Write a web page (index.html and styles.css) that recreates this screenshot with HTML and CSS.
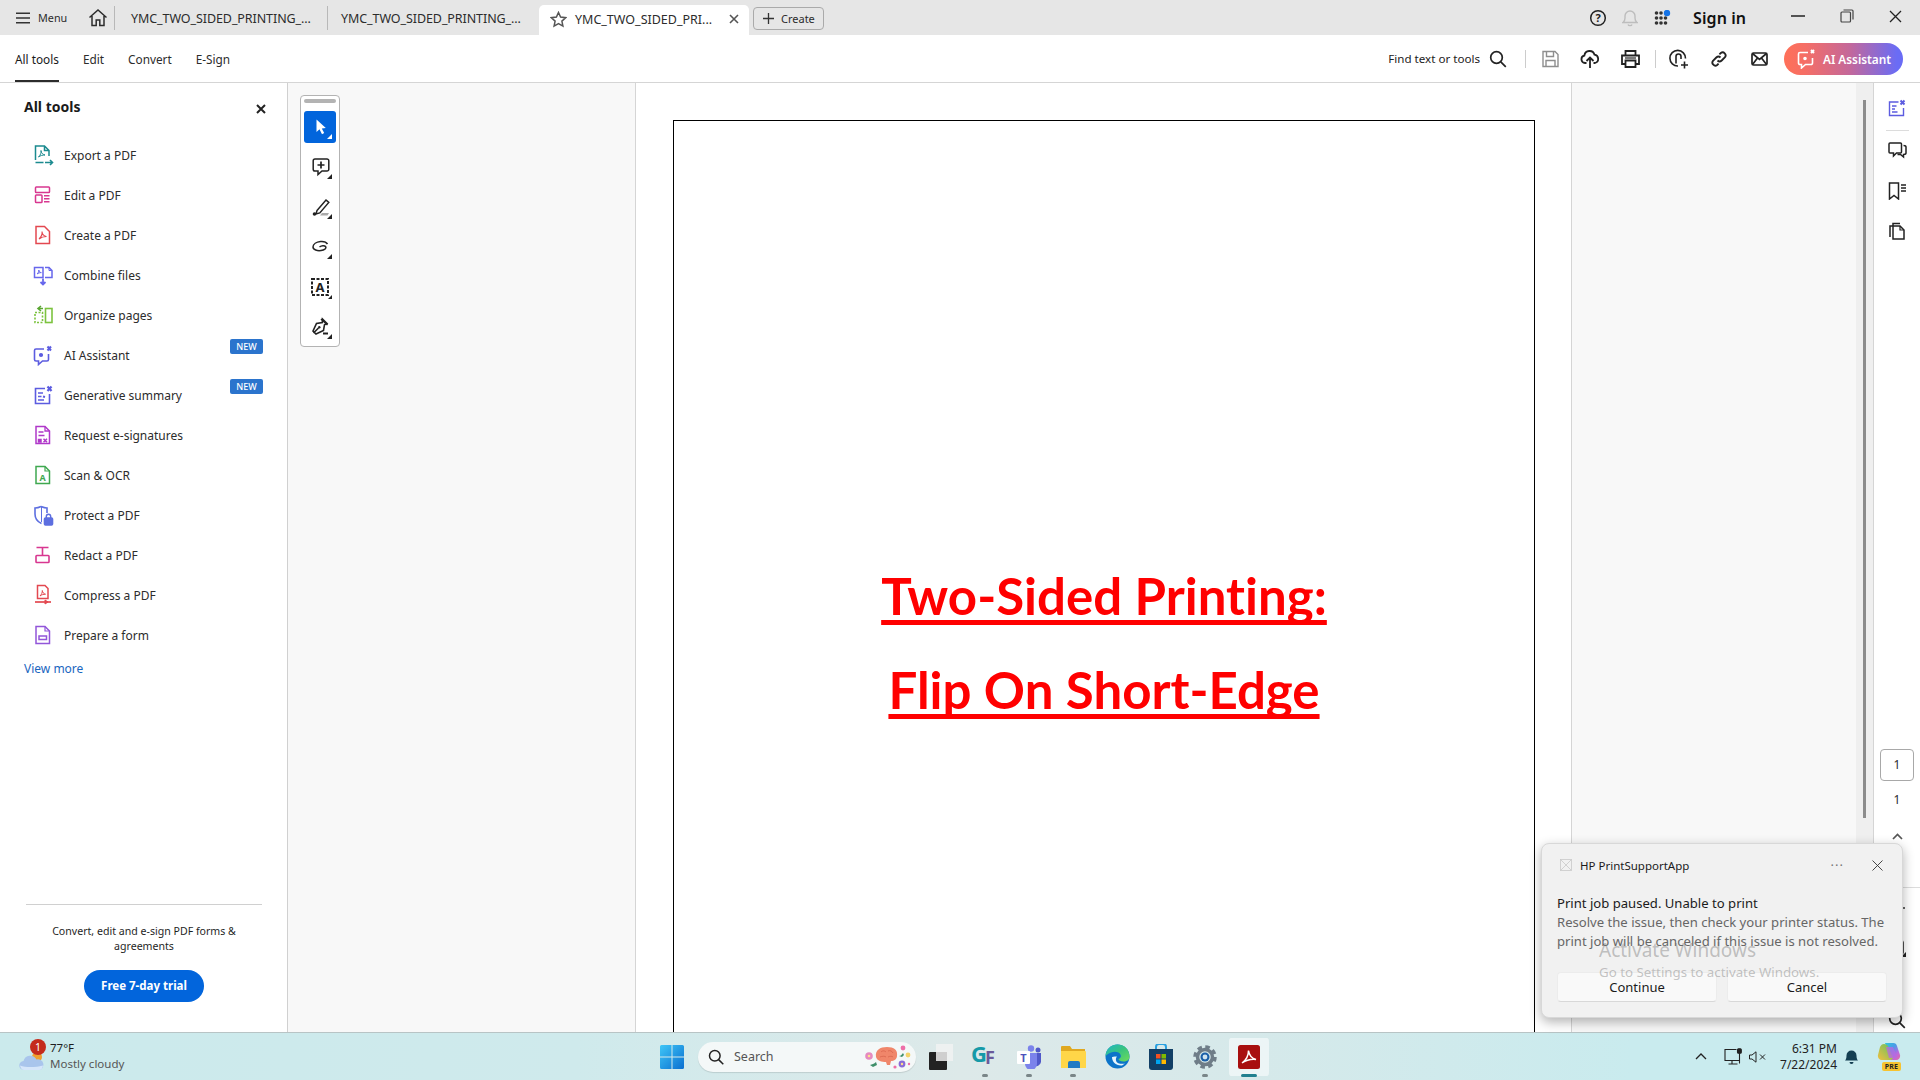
FILE: index.html
```html
<!DOCTYPE html>
<html lang="en">
<head>
<meta charset="utf-8">
<title>YMC_TWO_SIDED_PRINTING</title>
<link rel="stylesheet" href="styles.css">
</head>
<body>
<div class="app">
  <header class="tabbar">
    <div class="menu">
      <svg class="i" width="14" height="12" viewBox="0 0 14 12"><path d="M0 1.2h14M0 6h14M0 10.800h14" stroke="#333" stroke-width="1.6"/></svg>
      <span>Menu</span>
    </div>
    <div class="home">
      <svg width="20" height="20" viewBox="0 0 20 20" fill="none" stroke="#2c2c2c" stroke-width="1.5"><path d="M1.500 9.500 10 2l8.500 7.500M4 8v9.500h4.200v-5.500h3.600v5.500H16V8"/></svg>
    </div>
    <div class="tab tab-a">YMC_TWO_SIDED_PRINTING_...</div>
    <div class="tab tab-b">YMC_TWO_SIDED_PRINTING_...</div>
    <div class="tab-active">
      <svg width="17" height="17" viewBox="0 0 17 17" fill="none" stroke="#555" stroke-width="1.500"><path d="m8.500 1.500 2.100 4.600 5 .6-3.700 3.400 1 5-4.400-2.500-4.400 2.500 1-5L1.400 6.700l5-.6z"/></svg>
      <span class="tab-title">YMC_TWO_SIDED_PRI...</span>
      <svg class="tab-x" width="10" height="10" viewBox="0 0 10 10"><path d="m1 1 8 8M9 1 1 9" stroke="#555" stroke-width="1.600"/></svg>
    </div>
    <div class="create">
      <svg width="11" height="11" viewBox="0 0 11 11"><path d="M5.500 0v11M0 5.500h11" stroke="#333" stroke-width="1.300"/></svg>
      <span>Create</span>
    </div>
    <div class="top-right">
      <div class="top-cell">
        <svg width="18" height="18" viewBox="0 0 18 18"><circle cx="9" cy="9" r="7.300" fill="none" stroke="#222" stroke-width="1.500"/><text x="9" y="12.800" text-anchor="middle" class="svg-q">?</text></svg>
      </div>
      <div class="top-cell">
        <svg width="16" height="18" viewBox="0 0 16 18" fill="none" stroke="#bdbdbd" stroke-width="1.400"><path d="M1 13.500c1.500-1 2-2 2-4.500V7a5 5 0 0 1 10 0v2c0 2.500.5 3.500 2 4.500zM6 15.500c.5 1.500 3.500 1.500 4 0"/></svg>
      </div>
      <div class="top-cell">
        <svg width="17" height="16" viewBox="0 0 17 16"><g fill="#333"><circle cx="2.500" cy="3" r="1.800"/><circle cx="7" cy="3" r="1.800"/><circle cx="2.500" cy="8" r="1.800"/><circle cx="7" cy="8" r="1.800"/><circle cx="11.500" cy="8" r="1.800"/><circle cx="2.500" cy="13" r="1.800"/><circle cx="7" cy="13" r="1.800"/><circle cx="11.500" cy="13" r="1.800"/></g><circle cx="13" cy="3" r="3.200" fill="#1473e6"/></svg>
      </div>
      <div class="signin">Sign in</div>
      <div class="win-cell">
        <svg width="14" height="2" viewBox="0 0 14 2"><path d="M0 1h14" stroke="#222" stroke-width="1.500"/></svg>
      </div>
      <div class="win-cell">
        <svg width="14" height="14" viewBox="0 0 14 14" fill="none" stroke="#444" stroke-width="1.200"><rect x="1" y="3" width="9.500" height="10" rx="1"/><path d="M3.500 1H12a1 1 0 0 1 1 1v8.500"/></svg>
      </div>
      <div class="win-cell">
        <svg width="13" height="13" viewBox="0 0 13 13"><path d="m1 1 11 11M12 1 1 12" stroke="#222" stroke-width="1.300"/></svg>
      </div>
    </div>
  </header>

  <nav class="toolbar">
    <div class="nav-item nav-active">All tools</div>
    <div class="nav-item">Edit</div>
    <div class="nav-item">Convert</div>
    <div class="nav-item">E-Sign</div>
    <div class="tb-right">
      <span class="find">Find text or tools</span>
      <div class="search-cell">
        <svg width="18" height="18" viewBox="0 0 18 18" fill="none" stroke="#222" stroke-width="1.700"><circle cx="7.500" cy="7.500" r="5.800"/><path d="m11.800 11.800 5 5"/></svg>
      </div>
      <div class="tb-sep tb-sep-a"></div>
      <div class="tb-cell">
        <svg width="17" height="18" viewBox="0 0 17 18" fill="none" stroke="#8e8e8e" stroke-width="1.400"><path d="M1 1.500h12L16 4.500v12H1zM4.500 1.500v5h7v-5M4 16.500v-6h9v6"/></svg>
      </div>
      <div class="tb-cell">
        <svg width="20" height="20" viewBox="0 0 20 20" fill="none" stroke="#222" stroke-width="1.800"><path d="M6.500 14H5a3.800 3.800 0 0 1-.6-7.500A5.200 5.200 0 0 1 14.500 5.600 4.300 4.300 0 0 1 15 14h-1.500M10 19V9M6.500 12 10 8.500l3.500 3.500"/></svg>
      </div>
      <div class="tb-cell">
        <svg width="19" height="18" viewBox="0 0 19 18" fill="none" stroke="#222" stroke-width="1.800"><path d="M4.500 5V1h10v4M4.500 14H1V5.500h17V14h-3.500"/><path d="M4.500 10.500h10V17h-10z"/><path d="M4 8h11" stroke-width="1.200"/></svg>
      </div>
      <div class="tb-sep tb-sep-b"></div>
      <div class="tb-cell">
        <svg width="20" height="20" viewBox="0 0 20 20" fill="none" stroke="#222" stroke-width="1.600"><path d="M9 17A7.800 7.800 0 1 1 16.500 9.500M7 14.500V7.500a2.500 2.500 0 0 1 5 0V10"/><path d="M15.500 12.500v7M12 16h7"/></svg>
      </div>
      <div class="tb-cell">
        <svg width="18" height="18" viewBox="0 0 18 18" fill="none" stroke="#222" stroke-width="1.800"><path d="M7.500 10.500a3 3 0 0 0 4.200 0l3.300-3.300a3 3 0 0 0-4.200-4.200L9.400 4.400"/><path d="M10.500 7.500a3 3 0 0 0-4.200 0L3 10.800A3 3 0 0 0 7.200 15l1.400-1.400"/></svg>
      </div>
      <div class="tb-cell">
        <svg width="17" height="14" viewBox="0 0 17 14" fill="none" stroke="#222" stroke-width="1.700"><rect x="1" y="1" width="15" height="12" rx="1.500"/><path d="m1.500 1.500 7 6 7-6M1.500 12.500 6.500 6M15.500 12.500l-5-6.500"/></svg>
      </div>
      <div class="ai-btn">
        <svg width="20" height="20" viewBox="0 0 20 20" fill="none" stroke="#fff" stroke-width="1.600"><path d="M11 3.500H3a1.500 1.500 0 0 0-1.500 1.500v9A1.500 1.500 0 0 0 3 15.500h1.500V19l4-3.500H14a1.500 1.500 0 0 0 1.500-1.500V9"/><path d="m14 1 3 3M17 1l-3 3" stroke-width="2"/><circle cx="8" cy="9.500" r="1" fill="#fff"/></svg>
        <span>AI Assistant</span>
      </div>
    </div>
  </nav>

  <main class="main">
    <aside class="sidebar">
      <div class="side-head">
        <h2>All tools</h2>
        <svg width="10" height="10" viewBox="0 0 10 10"><path d="m1 1 8 8M9 1 1 9" stroke="#222" stroke-width="2"/></svg>
      </div>
      <div class="tool">
        <svg width="22" height="22" viewBox="0 0 22 22" fill="none" stroke="#1b8a8f" stroke-width="1.500"><path d="M3.500 16V2h9l4.500 4.500V12M12.500 2v4.500H17M3.500 18.500h8"/><path d="M6.500 13c2-2 3-4.500 2.500-6.500 0 2.500 2 4 4 4.500-2.500 0-4.500.5-6.500 2z" stroke-width="1"/><path d="M13 18.500h7.500M18 16l2.500 2.500L18 21" stroke-width="1.600"/></svg>
        <span>Export a PDF</span>
      </div>
      <div class="tool">
        <svg width="22" height="22" viewBox="0 0 22 22" fill="none" stroke="#d83790" stroke-width="1.500"><rect x="3.500" y="3" width="14" height="5.500" rx=".8"/><rect x="3.500" y="11" width="6.500" height="7.500" rx=".8"/><path d="M12 11.800h5.500M12 14.800h5.500M12 17.800h5.500"/></svg>
        <span>Edit a PDF</span>
      </div>
      <div class="tool">
        <svg width="22" height="22" viewBox="0 0 22 22" fill="none" stroke="#e34850" stroke-width="1.500"><path d="M4 2.500h8.500l5 5v12H4z"/><path d="M7 15c2-2 3.500-5 3-7.500.2 2.700 2 4.500 4.500 5-2.700 0-5.300.8-7.500 2.500z" stroke-width="1.100"/></svg>
        <span>Create a PDF</span>
      </div>
      <div class="tool">
        <svg width="22" height="22" viewBox="0 0 22 22" fill="none" stroke="#6767ec" stroke-width="1.500"><path d="M2.500 13.500v-10h8.500v10zM13 3.500h4l3 3v7h-7"/><path d="M5 10c1.200-1 2-2.500 1.800-4 .2 1.500 1 2.300 2.500 2.600-1.500 0-3 .4-4.300 1.400zM17 3.500v3h3" stroke-width="1"/><path d="M11 14.500v5.500M8.500 18l2.500 2.500 2.500-2.500" stroke-width="1.800"/></svg>
        <span>Combine files</span>
      </div>
      <div class="tool">
        <svg width="22" height="22" viewBox="0 0 22 22" fill="none" stroke="#7cc33f" stroke-width="1.600"><rect x="13.500" y="4.500" width="6.500" height="14"/><path d="M3 8.500h7.500v10H3z" stroke-dasharray="2 1.500"/><path d="M11 4.500H7M9 2 6 4.500 9 7" stroke="#59a632"/></svg>
        <span>Organize pages</span>
      </div>
      <div class="tool">
        <svg width="22" height="22" viewBox="0 0 22 22" fill="none" stroke="#5c5ce0" stroke-width="1.600"><path d="M12 5H4a1.500 1.500 0 0 0-1.500 1.500v9A1.500 1.500 0 0 0 4 17h2.500v3.500l4-3.500H15a1.500 1.500 0 0 0 1.500-1.500V10"/><path d="m15.500 2.500 3.500 4M19 2.500l-3.500 4" stroke-width="2"/><circle cx="9" cy="11" r="1.300" fill="#5c5ce0"/></svg>
        <span>AI Assistant</span>
        <b class="new">NEW</b>
      </div>
      <div class="tool">
        <svg width="22" height="22" viewBox="0 0 22 22" fill="none" stroke="#5c5ce0" stroke-width="1.600"><path d="M13 4.500H3.500v15h14V10"/><path d="M6 9h5M6 12.500h3.500M6 16h6" stroke-width="1.500"/><path d="m11 12.500 2 .5" stroke-width="2"/><path d="m15.500 2.500 4 4.500M19.500 2.500l-4 4.500" stroke-width="2.200"/></svg>
        <span>Generative summary</span>
        <b class="new">NEW</b>
      </div>
      <div class="tool">
        <svg width="22" height="22" viewBox="0 0 22 22" fill="none" stroke="#b038c9" stroke-width="1.500"><path d="M4 2.500h9l4.500 4.500v12.500H4z"/><path d="M13 2.500V7h4.500M6.500 8h5M6.500 11.500h6" stroke-width="1.300"/><path d="M6.500 15.500h2.500v2.500H6.500z" fill="#b038c9"/><path d="m11.500 14.800 3.500 3.500M15 14.800l-3.500 3.500"/></svg>
        <span>Request e-signatures</span>
      </div>
      <div class="tool">
        <svg width="22" height="22" viewBox="0 0 22 22" fill="none" stroke="#3fa850" stroke-width="1.500"><path d="M4 2.500h9l4.500 4.500v12.500H4z"/><path d="M13 2.500V7h4.500" stroke-width="1.200"/><text x="10.700" y="16.800" text-anchor="middle" class="svg-a">A</text></svg>
        <span>Scan &amp; OCR</span>
      </div>
      <div class="tool">
        <svg width="22" height="22" viewBox="0 0 22 22" fill="none" stroke="#5d6fe0" stroke-width="1.600"><path d="M9 2.500c-2 1-4 1.500-6 1.500v6c0 5 3 8 6.500 9.500M9 2.500c2.500 1 4.500 1.500 6 1.500v5"/><path d="M9.500 3v15" stroke-width="1"/><rect x="12.500" y="14" width="8" height="7" rx="1" fill="#5d6fe0"/><path d="M14.300 14v-1.500a2.200 2.200 0 0 1 4.400 0V14" stroke-width="1.400"/></svg>
        <span>Protect a PDF</span>
      </div>
      <div class="tool">
        <svg width="22" height="22" viewBox="0 0 22 22" fill="none" stroke="#d83790" stroke-width="1.600"><path d="M4.500 3.500h12M10.500 3.500v7.500"/><rect x="4" y="11.500" width="13" height="7" rx=".8"/></svg>
        <span>Redact a PDF</span>
      </div>
      <div class="tool">
        <svg width="22" height="22" viewBox="0 0 22 22" fill="none" stroke="#e34850" stroke-width="1.500"><path d="M5.500 14.500v-13H13l3 3v10z"/><path d="M8 12c1.500-1.500 2.500-3.500 2.300-5.500.2 2 1.400 3.300 3.200 3.700-2 0-4 .5-5.500 1.800z" stroke-width="1"/><path d="M3 18h16" stroke-width="1.700"/><path d="m13 16 3 2-3 2z" fill="#e34850" stroke-width="1"/></svg>
        <span>Compress a PDF</span>
      </div>
      <div class="tool">
        <svg width="22" height="22" viewBox="0 0 22 22" fill="none" stroke="#9256d9" stroke-width="1.500"><path d="M4 2.500h9l4.500 4.500v12.500H4z"/><path d="M13 2.500V7h4.500" stroke-width="1.200"/><rect x="7" y="12" width="7.500" height="3.500" stroke-width="1.500"/></svg>
        <span>Prepare a form</span>
      </div>
      <a class="view-more">View more</a>
      <div class="side-foot">
        <p>Convert, edit and e-sign PDF forms &amp; agreements</p>
        <div class="trial">Free 7-day trial</div>
      </div>
    </aside>

    <section class="gutter">
      <div class="rail">
        <div class="grip"></div>
        <div class="rbtn rbtn-on">
          <svg width="32" height="32" viewBox="0 0 32 32"><path d="M12.500 8.500v12.500l3-2.700 2.500 4.900 2.200-1.100-2.400-4.700 4-.4z" fill="#fff"/><path d="M28 23v5h-5z" fill="#fff"/></svg>
        </div>
        <div class="rbtn">
          <svg width="32" height="32" viewBox="0 0 32 32" fill="none" stroke="#222" stroke-width="1.500"><path d="M11 8h12a1.800 1.800 0 0 1 1.800 1.800v8.400A1.800 1.800 0 0 1 23 20h-5l-4 3.500V20h-3a1.800 1.800 0 0 1-1.800-1.800V9.800A1.800 1.800 0 0 1 11 8z"/><path d="M17 10.500v7M13.500 14h7" stroke-width="1.700"/><path d="M28 23v5h-5z" fill="#222" stroke="none"/></svg>
        </div>
        <div class="rbtn">
          <svg width="32" height="32" viewBox="0 0 32 32" fill="none" stroke="#222" stroke-width="1.500"><path d="m13 19.500 9-10.500 2.800 2.400-9 10.500-3.800 1z"/><circle cx="10.500" cy="23" r="1.800" fill="#222" stroke="none"/><path d="M16 24.500l2-2.500h7l-1.500 2.500z" fill="#aaa" stroke="none"/><path d="M28 23v5h-5z" fill="#222" stroke="none"/></svg>
        </div>
        <div class="rbtn">
          <svg width="32" height="32" viewBox="0 0 32 32" fill="none" stroke="#222" stroke-width="1.500"><path d="M23.500 13c-1.500-2.500-4-2.800-7-2.500-4 .4-7.500 2.500-7.500 5.500 0 3 4.500 4 8 3.500 3-.4 6-2 4.500-4-1-1.300-4-1-6 .5"/><path d="M28 23v5h-5z" fill="#222" stroke="none"/></svg>
        </div>
        <div class="rbtn">
          <svg width="32" height="32" viewBox="0 0 32 32"><rect x="8" y="8" width="16" height="16" fill="none" stroke="#222" stroke-width="2" stroke-dasharray="3 1.500"/><text x="16" y="21" text-anchor="middle" class="svg-ta">A</text><path d="M28 24v4h-4z" fill="#222"/></svg>
        </div>
        <div class="rbtn">
          <svg width="32" height="32" viewBox="0 0 32 32" fill="none" stroke="#222" stroke-width="1.600"><path d="M18.500 8 23 12.500l-2.500 1.200-1 5.800-7.500 3.500-3-3 3.500-7.500 5.800-1zM9.500 22l5-5"/><circle cx="15.300" cy="16.300" r="1.200" fill="#222" stroke="none"/><path d="m17 8 6.500 6" stroke-width="1.500"/><path d="M19 22.500h5" stroke-width="2"/><path d="M28 23v5h-5z" fill="#222" stroke="none"/></svg>
        </div>
      </div>
    </section>

    <section class="pane">
      <div class="sheet">
        <h1>Two-Sided Printing:</h1>
        <h1>Flip On Short-Edge</h1>
      </div>
    </section>

    <section class="gray-right"></section>
    <div class="scroll"><div class="thumb"></div></div>

    <aside class="right-rail">
      <div class="rr-top">
        <svg width="18" height="18" viewBox="0 0 18 18" fill="none" stroke="#5c5ce0" stroke-width="1.400"><path d="M10.500 3H1.500v13.500h14V9"/><path d="M4 7h4.500M4 10h3M4 13h5.500"/><path d="m12.500 1.500 4 4M16.500 1.500l-4 4" stroke-width="2"/></svg>
      </div>
      <div class="rr-line"></div>
      <div class="rr-icon rr-a">
        <svg width="19" height="18" viewBox="0 0 19 18" fill="none" stroke="#222" stroke-width="1.500"><path d="M1 2a1 1 0 0 1 1-1h10.500a1 1 0 0 1 1 1v8a1 1 0 0 1-1 1H8.500L5.500 14v-3H2a1 1 0 0 1-1-1z"/><path d="M15.500 3.500c1.500 0 2.500.5 2.500 1.500v6c0 1-1 1.500-2.500 1.500v2.500l-3-2.500h-3"/></svg>
      </div>
      <div class="rr-icon rr-b">
        <svg width="19" height="18" viewBox="0 0 19 18" fill="none" stroke="#222" stroke-width="1.500"><path d="M1.500 1h9v16l-4.500-3.500L1.500 17z"/><path d="M13 3h5M13 6h5M13 9h5" stroke-width="1.300"/></svg>
      </div>
      <div class="rr-icon rr-b">
        <svg width="17" height="18" viewBox="0 0 17 18" fill="none" stroke="#222" stroke-width="1.500"><path d="M4 4V1.500h7M4 4H1v11M4 4h7l4 4v9H4z"/><path d="M11 4v4h4" stroke-width="1.200"/></svg>
      </div>
      <div class="rr-bottom">
        <div class="page-box">1</div>
        <div class="page-num">1</div>
        <div class="page-up">
          <svg width="11" height="7" viewBox="0 0 11 7"><path d="m1 6 4.500-4.500L10 6" fill="none" stroke="#555" stroke-width="1.700"/></svg>
        </div>
        <div class="rr-line rr-line-b"></div>
        <div class="rr-row"><svg width="18" height="18" viewBox="0 0 18 18"><path d="M9 1v16M1 9h16" stroke="#333" stroke-width="1.600"/></svg></div>
        <div class="rr-row"><svg width="18" height="18" viewBox="0 0 18 18" fill="none" stroke="#222" stroke-width="1.600"><rect x="2" y="2" width="13" height="13" rx="1.500"/><path d="M18 13v5h-5z" fill="#222" stroke="none"/></svg></div>
        <div class="rr-row"><svg width="18" height="18" viewBox="0 0 18 18"><path d="M9 3v12M3 9h12" stroke="#333" stroke-width="1.600"/></svg></div>
        <div class="rr-row rr-last"><svg width="18" height="18" viewBox="0 0 18 18" fill="none" stroke="#222" stroke-width="1.700"><circle cx="7.500" cy="7.500" r="5.800"/><path d="m11.800 11.800 5 5"/></svg></div>
      </div>
    </aside>
  </main>

  <footer class="taskbar">
    <div class="weather">
      <div class="w-icon">
        <svg width="26" height="22" viewBox="0 0 26 22"><circle cx="18" cy="8" r="5" fill="#f0a030"/><path d="M5 21a4.500 4.500 0 0 1-.5-9 7 7 0 0 1 13-1.500A5.300 5.300 0 0 1 20.500 21z" fill="#a9c5ec"/><path d="M1 16.500c6 2 15 2 23 0-.5 3-2 4.500-3.500 4.500H5c-2 0-3.500-2-4-4.500z" fill="#d6e6fa"/></svg>
        <span class="w-badge">1</span>
      </div>
      <div class="w-text">
        <div class="w-temp">77°F</div>
        <div class="w-desc">Mostly cloudy</div>
      </div>
    </div>
    <div class="start">
      <svg width="24" height="24" viewBox="0 0 24 24"><defs><linearGradient id="win" x1="0" y1="0" x2="1" y2="1"><stop offset="0" stop-color="#3fc6f7"/><stop offset="1" stop-color="#0a6fd0"/></linearGradient></defs><path d="M0 1.500A1.500 1.500 0 0 1 1.500 0h10v11.500H0zM12.500 0h10A1.500 1.500 0 0 1 24 1.500v10H12.500zM0 12.500h11.500V24h-10A1.500 1.500 0 0 1 0 22.500zM12.500 12.500H24v10a1.500 1.500 0 0 1-1.500 1.500h-10z" fill="url(#win)"/></svg>
    </div>
    <div class="tsearch">
      <svg width="16" height="16" viewBox="0 0 16 16" fill="none" stroke="#222" stroke-width="1.500"><circle cx="6.800" cy="6.800" r="5.300"/><path d="m10.600 10.600 4.700 4.700"/></svg>
      <span>Search</span>
      <svg class="brain" width="48" height="28" viewBox="0 0 48 28"><circle cx="5" cy="13" r="3.800" fill="#e58ac0"/><circle cx="5" cy="13" r="1.300" fill="#ffe08a"/><path d="M6 22c2-1 4-1 6-3l1 3-4 2z" fill="#3f8f6a"/><path d="M12 14C11 7 16 4 23 4s11 3 10 9c0 3-3 5-6 5l-1 4h-3l-1-3c-4 0-9-1-10-5z" fill="#f0866a"/><path d="M17 9c2-2 4-1 5 0M24 8c2-1 4 0 5 2M16 14c2-1 5-1 6 0M24 14c2-1 4-1 5 0" fill="none" stroke="#d8644c" stroke-width=".8"/><circle cx="39" cy="5" r="2.400" fill="#ee6ea8"/><path d="M35 13c2 0 3-2 4-3l1 2-2 2z" fill="#3f8f6a"/><circle cx="44" cy="12" r="2.400" fill="#f3d36a"/><circle cx="38" cy="21" r="3.400" fill="#8a6bd8"/><circle cx="38" cy="21" r="1.200" fill="#ffe08a"/><circle cx="31" cy="24" r="1.600" fill="#ee6ea8"/><circle cx="45" cy="21" r="1.200" fill="#ee6ea8"/></svg>
    </div>
    <div class="task">
      <svg width="24" height="26" viewBox="0 0 24 26"><rect x="7" y="0" width="17" height="17" fill="#f2f2f2" opacity=".8"/><rect x="0" y="8" width="18" height="18" rx="1" fill="#222"/><rect x="7" y="8" width="11" height="9" fill="#cfcfcf"/></svg>
    </div>
    <div class="task task-dot">
      <svg width="30" height="26" viewBox="0 0 30 26"><text x="1" y="18" class="svg-g">G</text><text x="15" y="19.500" class="svg-f">F</text></svg>
    </div>
    <div class="task task-dot">
      <svg width="26" height="24" viewBox="0 0 26 24"><circle cx="15" cy="3.500" r="3.200" fill="#7b83eb"/><circle cx="22" cy="5" r="2.500" fill="#5059c9"/><path d="M18.500 8H25v9a5 5 0 0 1-6 4z" fill="#5059c9"/><path d="M9 8h12v11a6 6 0 0 1-12 0z" fill="#7b83eb"/><rect x="1" y="6" width="13" height="13" rx="1" fill="#fff"/><text x="7.500" y="16.500" text-anchor="middle" class="svg-t">T</text></svg>
    </div>
    <div class="task task-dot">
      <svg width="25" height="24" viewBox="0 0 25 24"><path d="M0 2a1 1 0 0 1 1-1h8l2 3h13v4H0z" fill="#e0a820"/><path d="M0 6h24a1 1 0 0 1 1 1v16H0z" fill="#ffd648"/><path d="M7 18a2 2 0 0 1 2-2h8a2 2 0 0 1 2 2v5H7z" fill="#1f7ac4"/></svg>
    </div>
    <div class="task">
      <svg width="25" height="25" viewBox="0 0 25 25"><defs><linearGradient id="ed" x1="0" y1="0" x2="1" y2="1"><stop offset="0" stop-color="#1fb6c8"/><stop offset=".5" stop-color="#39c47e"/><stop offset="1" stop-color="#6fdc5a"/></linearGradient></defs><circle cx="12.500" cy="12.500" r="12" fill="#0c74c9"/><path d="M.5 12C1 5 6 .5 12.500.5S24.500 5 24.500 13c0 3-3 4.500-6 4.500s-5-1-5-2.500c1.500-.5 3-2 2.200-4C14.500 8 10 7 6 8.500 3.500 9.500 1.500 11 .5 12z" fill="url(#ed)"/><path d="M7 13c0 5 4 9 10 8.500l3-2c-2 .5-8 1-9-3-.5-2 .5-3.500 1-4-3 0-5 .5-5 .5z" fill="#e6f4fb"/></svg>
    </div>
    <div class="task">
      <svg width="24" height="26" viewBox="0 0 24 26"><path d="M7 6V3a3 3 0 0 1 3-3h4a3 3 0 0 1 3 3v3" fill="none" stroke="#2aa0e0" stroke-width="2"/><path d="M0 5h24v18a3 3 0 0 1-3 3H3a3 3 0 0 1-3-3z" fill="#123f66"/><rect x="7" y="10" width="4.500" height="4.500" fill="#f25022"/><rect x="12.500" y="10" width="4.500" height="4.500" fill="#7fba00"/><rect x="7" y="15.500" width="4.500" height="4.500" fill="#00a4ef"/><rect x="12.500" y="15.500" width="4.500" height="4.500" fill="#ffb900"/></svg>
    </div>
    <div class="task task-dot">
      <svg width="24" height="24" viewBox="0 0 24 24" fill="none"><circle cx="12" cy="12" r="10" stroke="#6f7d88" stroke-width="3.500" stroke-dasharray="4.500 3.350"/><circle cx="12" cy="12" r="7.500" stroke="#6f7d88" stroke-width="3.500"/><circle cx="12" cy="12" r="4.500" fill="#1b5fa8"/><circle cx="12" cy="12" r="2.400" fill="#cfe3ef"/></svg>
    </div>
    <div class="task task-on">
      <svg width="22" height="24" viewBox="0 0 22 24"><rect width="22" height="24" rx="2.500" fill="#a80f0f"/><path d="M4 18c3.500-2.500 6.500-7 6.500-12.500.5 4 2.500 7.500 7.500 9-4.500-.5-9.500.5-14 3.500z" fill="none" stroke="#fff" stroke-width="1.500"/></svg>
    </div>
    <div class="tray">
      <div class="tr-chev"><svg width="12" height="7" viewBox="0 0 12 7"><path d="m1 6 5-5 5 5" fill="none" stroke="#222" stroke-width="1.300"/></svg></div>
      <div class="tr-mon"><svg width="19" height="17" viewBox="0 0 19 17" fill="none" stroke="#222" stroke-width="1.100"><path d="M12.500 1.500H1v11h15M8 12.500V16M4.500 16h9"/><rect x="13.500" y=".8" width="3.800" height="4.500" rx="1" fill="#222"/><path d="M15.500 5v10.500"/></svg></div>
      <div class="tr-vol"><svg width="17" height="12" viewBox="0 0 17 12" fill="none" stroke="#222" stroke-width="1"><path d="M.5 4h2.500L7 .8v10.400L3 8H.5z"/><path d="m11 3.500 5 5M16 3.500l-5 5"/></svg></div>
      <div class="clock"><div>6:31 PM</div><div>7/22/2024</div></div>
      <div class="tr-bell"><svg width="13" height="15" viewBox="0 0 13 15"><path d="M0 11.500c1-1 1.500-2.500 1.500-5a5 5 0 0 1 10 0c0 2.500.5 4 1.500 5zM4.500 13h4a2 2 0 0 1-4 0z" fill="#143f52"/></svg></div>
      <div class="tr-cop">
        <svg width="24" height="26" viewBox="0 0 24 26"><defs><linearGradient id="cp" x1="0" y1="0" x2="1" y2="1"><stop offset="0" stop-color="#31c8d8"/><stop offset=".4" stop-color="#4a9be8"/><stop offset=".7" stop-color="#b86ae0"/><stop offset="1" stop-color="#e86aa0"/></linearGradient><linearGradient id="cq" x1="0" y1="1" x2="1" y2="0"><stop offset="0" stop-color="#f0c040"/><stop offset="1" stop-color="#60c060"/></linearGradient></defs><path d="M8 0h8a4 4 0 0 1 4 3l3 9a4 4 0 0 1-4 5h-5L8 0z" fill="url(#cp)"/><path d="M7 1c-2 0-3 1-4 3l-2 8a4 4 0 0 0 4 5h8a3 3 0 0 0 3-2L11 3C10 2 9 1 7 1z" fill="url(#cq)"/><path d="M9 4h7l4 9c0 1-1 2-2 2h-6z" fill="#b86ae0" opacity=".75"/></svg>
        <span class="pre">PRE</span>
      </div>
    </div>
  </footer>
</div>

<div class="activate">
  <div class="act-a">Activate Windows</div>
  <div class="act-b">Go to Settings to activate Windows.</div>
</div>

<div class="toast">
  <div class="toast-head">
    <svg width="12" height="12" viewBox="0 0 12 12" fill="none" stroke="#c9c9c9" stroke-width=".8"><rect x=".5" y=".5" width="11" height="11"/><path d="m.5.500 11 11M11.500.5l-11 11"/></svg>
    <span class="toast-app">HP PrintSupportApp</span>
    <span class="toast-more">···</span>
    <svg width="11" height="11" viewBox="0 0 11 11"><path d="m.5.500 10 10M10.500.5l-10 10" stroke="#333" stroke-width=".9"/></svg>
  </div>
  <div class="toast-title">Print job paused. Unable to print</div>
  <div class="toast-body">Resolve the issue, then check your printer status. The<br>print job will be canceled if this issue is not resolved.</div>
  <div class="toast-btns">
    <div class="toast-btn">Continue</div>
    <div class="toast-btn">Cancel</div>
  </div>
</div>
</body>
</html>
```

FILE: styles.css
```css
* { box-sizing: border-box; }
html, body { margin: 0; padding: 0; height: 100%; overflow: hidden; }
body { font-family: "Noto Sans", "Open Sans", sans-serif; color: #2c2c2c; background: #fff; }
svg { display: block; flex: none; }
.app { height: 1080px; display: flex; flex-direction: column; position: relative; }

.tabbar { height: 35px; background: #e6e6e6; display: flex; align-items: stretch; flex: none; font-size: 12.5px; }
.menu { width: 84px; padding-left: 16px; display: flex; align-items: center; gap: 8px; font-size: 10.8px; }
.home { width: 30px; padding-left: 4px; display: flex; align-items: center; }
.tab { width: 213px; height: 24px; margin-top: 6px; padding-left: 16px; line-height: 25px; border-left: 1px solid #b8b8b8; white-space: nowrap; letter-spacing: -.08px; }
.tab-b { width: 212px; padding-left: 13px; }
.tab-active { width: 210px; margin-top: 5px; background: #fff; border-radius: 5px 5px 0 0; display: flex; align-items: center; padding: 0 0 2px 11px; white-space: nowrap; }
.tab-title { margin-left: 8px; width: 150px; }
.tab-x { margin-left: 4px; }
.create { width: 71px; height: 23px; margin: 7px 0 0 4px; border: 1px solid #aaa; border-radius: 4px; display: flex; align-items: center; gap: 7px; padding-left: 9px; font-size: 11px; }
.top-right { margin-left: auto; display: flex; align-items: stretch; }
.top-cell { width: 32px; display: flex; align-items: center; justify-content: center; }
.signin { width: 52px; margin-left: 15px; font-size: 16px; font-weight: 600; line-height: 37px; color: #111; white-space: nowrap; letter-spacing: .1px; }
.win-cell { width: 49px; display: flex; align-items: center; justify-content: center; padding-bottom: 3px; }
.signin + .win-cell { margin-left: 28px; }
.svg-q { font: 700 11px "Noto Sans", sans-serif; fill: #222; }

.toolbar { height: 48px; flex: none; border-bottom: 1px solid #d5d5d5; padding-left: 15px; display: flex; gap: 24px; font-size: 11.8px; align-items: stretch; }
.nav-item { height: 47px; line-height: 48px; white-space: nowrap; }
.nav-active { border-bottom: 2px solid #2c2c2c; color: #1a1a1a; }
.tb-right { margin-left: auto; display: flex; align-items: center; padding-right: 17px; }
.find { font-size: 11.6px; color: #222; }
.search-cell { width: 24px; margin-left: 6px; display: flex; justify-content: center; }
.tb-sep { width: 1px; height: 18px; background: #ccc; }
.tb-sep-a { margin: 0 4px 0 15px; }
.tb-sep-b { margin: 0 3px 0 5px; }
.tb-cell { width: 40px; display: flex; justify-content: center; }
.ai-btn { width: 119px; height: 32px; margin-left: 5px; border-radius: 16px; background: linear-gradient(90deg, #ff7058 0, #f56e66 18%, #c4689a 55%, #6a6cf5 95%); color: #fff; font-size: 11.8px; font-weight: 600; display: flex; align-items: center; gap: 6px; padding-left: 13px; white-space: nowrap; }

.main { flex: 1; min-height: 0; display: flex; overflow: hidden; }
.sidebar { width: 288px; flex: none; border-right: 1px solid #d0d0d0; display: flex; flex-direction: column; background: #fff; }
.side-head { height: 52px; padding: 13px 21px 0 24px; display: flex; justify-content: space-between; align-items: flex-start; flex: none; }
.side-head h2 { margin: 0; font-size: 14px; font-weight: 700; line-height: 22px; color: #1a1a1a; }
.side-head svg { margin-top: 8px; }
.tool { height: 40px; flex: none; display: flex; align-items: center; padding: 0 24px 0 32px; font-size: 12px; gap: 10px; white-space: nowrap; }
.new { margin: -17px 0 0 auto; width: 33px; height: 15px; background: #2b74cd; color: #fff; border-radius: 2px; font-size: 9px; font-weight: 500; line-height: 15px; text-align: center; }
.view-more { height: 28px; padding-left: 24px; line-height: 28px; font-size: 12px; color: #1a66c0; flex: none; }
.side-foot { margin: auto 25px 0 26px; border-top: 1px solid #d0d0d0; padding: 19px 0 30px; display: flex; flex-direction: column; align-items: center; }
.side-foot p { margin: 0; font-size: 10.6px; line-height: 15px; text-align: center; color: #1f1f1f; }
.trial { margin-top: 16px; width: 120px; height: 32px; background: #0265dc; color: #fff; border-radius: 16px; font-size: 11.5px; font-weight: 700; text-align: center; line-height: 32px; }

.gutter { width: 348px; flex: none; background: #f8f8f8; border-right: 1px solid #d5d5d5; padding: 12px 0 0 12px; }
.rail { width: 40px; height: 252px; background: #fff; border: 1px solid #b3b3b3; border-radius: 4px; padding: 3px 3px; display: flex; flex-direction: column; gap: 8px; }
.grip { height: 4px; background: #b3b3b3; border-radius: 2px; flex: none; }
.rbtn { width: 32px; height: 32px; border-radius: 3px; flex: none; }
.rbtn-on { background: #0265dc; }
.svg-ta { font: 700 13px "Noto Sans", sans-serif; fill: #222; }
.svg-a { font: 700 9px "Noto Sans", sans-serif; fill: #3fa850; stroke: none; }

.pane { width: 936px; flex: none; background: #fff; border-right: 1px solid #d5d5d5; padding: 37px 0 0 37px; overflow: hidden; }
.sheet { width: 862px; height: 1000px; border: 1px solid #000; border-bottom: 0; text-align: center; padding-top: 436px; }
.sheet h1 { margin: 0 0 17px; font-family: Lato, "Noto Sans", sans-serif; font-variant-ligatures: none; font-weight: 700; font-size: 51px; line-height: 77px; color: #f00; text-decoration: underline; text-decoration-thickness: 5px; text-decoration-skip-ink: none; text-underline-offset: 5px; }

.gray-right { width: 284px; flex: none; background: #f8f8f8; }
.scroll { width: 17px; flex: none; background: #efefef; padding: 17px 0 0 7px; }
.thumb { width: 3px; height: 718px; background: #8c8c8c; }
.right-rail { width: 47px; flex: none; border-left: 1px solid #d5d5d5; display: flex; flex-direction: column; align-items: center; padding-top: 13px; background: #fff; }
.rr-top { height: 24px; display: flex; align-items: center; }
.rr-line { width: 23px; height: 1px; background: #dcdcdc; margin-top: 10px; flex: none; }
.rr-icon { height: 24px; display: flex; align-items: center; flex: none; }
.rr-a { margin-top: 8px; }
.rr-b { margin-top: 16px; }
.rr-bottom { margin-top: auto; display: flex; flex-direction: column; align-items: center; font-size: 12px; }
.page-box { width: 34px; height: 32px; border: 1px solid #a8a8a8; border-radius: 4px; text-align: center; line-height: 30px; }
.page-num { height: 38px; line-height: 38px; }
.page-up { height: 34px; display: flex; align-items: center; }
.rr-line-b { margin: 34px 0 0; width: 46px; }
.rr-row { height: 40px; display: flex; align-items: center; }
.rr-last { height: 24px; }

.taskbar { height: 48px; flex: none; border-top: 1px solid #b8c4c5; background: linear-gradient(90deg, #cbeaec 0, #cfeaec 30%, #dde9e9 50%, #d6e9ea 65%, #c9ebee 85%, #c9ebee 100%); display: flex; align-items: center; }
.weather { width: 652px; padding-left: 19px; display: flex; align-items: center; gap: 7px; flex: none; }
.w-icon { position: relative; width: 24px; height: 28px; padding-top: 6px; }
.w-badge { position: absolute; left: 11px; top: -4px; width: 16px; height: 16px; border-radius: 50%; background: #c42b1c; color: #fff; font-size: 10.500px; line-height: 16px; text-align: center; }
.w-text { font-size: 11.5px; line-height: 16px; padding-bottom: 2px; }
.w-temp { color: #1e1e1e; }
.w-desc { color: #555; }
.start { width: 40px; display: flex; justify-content: center; margin-right: 6px; flex: none; }
.tsearch { width: 218px; height: 30px; flex: none; margin-right: 3px; background: #f4f8f8; border-radius: 15px; box-shadow: 0 1px 1px rgba(0,0,0,.12); display: flex; align-items: center; padding-left: 10px; gap: 10px; font-size: 12.5px; color: #555; }
.brain { margin-left: auto; margin-right: 4px; }
.task { width: 44px; height: 38px; flex: none; display: flex; align-items: center; justify-content: center; position: relative; }
.task-dot::after { content: ""; position: absolute; left: 19px; bottom: -1px; width: 6px; height: 3px; border-radius: 2px; background: #7a8688; }
.task-on { background: rgba(255,255,255,.55); background-clip: content-box; padding: 0 2px; border-radius: 4px; }
.task-on::after { content: ""; position: absolute; left: 14px; bottom: -1px; width: 16px; height: 3px; border-radius: 2px; background: #20808f; }
.svg-g { font: 700 22px "Open Sans", sans-serif; fill: #159aa8; }
.svg-f { font: 700 18px "Open Sans", sans-serif; fill: #6a5a9a; }
.svg-t { font: 700 11px "Open Sans", sans-serif; fill: #4b53bc; }
.tray { margin-left: auto; padding-right: 18px; display: flex; align-items: center; }
.tr-chev { margin-right: 17px; }
.tr-mon { margin-right: 6px; }
.tr-vol { margin-right: 11px; }
.clock { width: 60px; text-align: right; font-size: 12px; line-height: 16px; color: #222; white-space: nowrap; }
.tr-bell { margin: 0 19px 0 8px; }
.tr-cop { position: relative; width: 25px; height: 28px; }
.pre { position: absolute; left: 5px; top: 19px; width: 19px; height: 9px; border-radius: 2px; background: #f7c32f; color: #222; font-size: 7px; font-weight: 700; line-height: 9px; text-align: center; letter-spacing: .2px; }

.activate { position: absolute; left: 1599px; top: 934px; z-index: 3; color: rgba(110,110,110,.4); white-space: nowrap; pointer-events: none; }
.act-a { font-size: 19px; line-height: 32px; }
.act-b { font-size: 13.3px; line-height: 12px; }
.toast { position: absolute; left: 1541px; top: 843px; width: 362px; height: 175px; z-index: 2; background: #f1f1f1; border: 1px solid #d8d8d8; border-radius: 8px; box-shadow: 0 4px 12px rgba(0,0,0,.3); padding: 0 15px; color: #1b1b1b; }
.toast-head { height: 44px; display: flex; align-items: center; padding: 0 0 2px 2px; font-size: 11.500px; }
.toast-head svg:first-child { margin-left: 1px; }
.toast-app { margin-left: 8px; }
.toast-more { margin-left: auto; color: #777; margin-right: 28px; letter-spacing: 1px; font-size: 13px; }
.toast-head svg:last-child { margin-right: 4px; }
.toast-title { margin-top: 5px; font-size: 13.1px; line-height: 20px; }
.toast-body { font-size: 13.1px; line-height: 19px; color: #666; white-space: nowrap; }
.toast-btns { margin-top: 21px; display: flex; gap: 10px; }
.toast-btn { width: 160px; height: 30px; background: #f9f9f9; border: 1px solid #ececec; border-bottom-color: #d8d8d8; border-radius: 4px; font-size: 13px; line-height: 28px; text-align: center; }
```
